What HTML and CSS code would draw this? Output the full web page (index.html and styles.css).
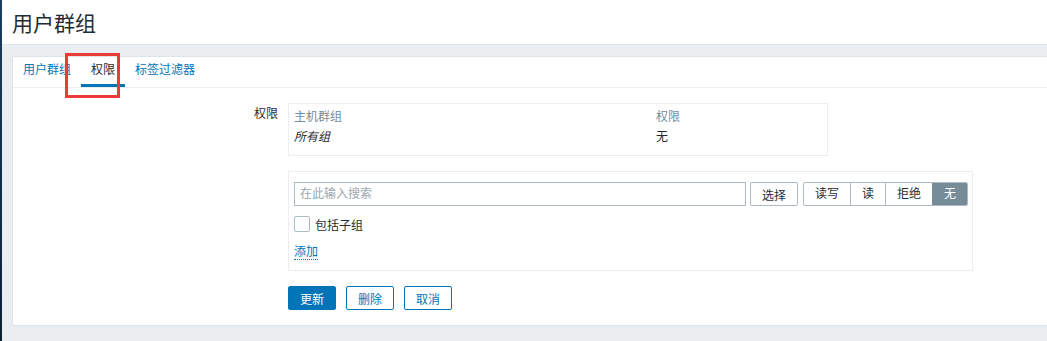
FILE: index.html
```html
<!DOCTYPE html>
<html lang="zh-CN">
<head>
    <meta charset="UTF-8">
    <meta name="viewport" content="width=device-width, initial-scale=1.0">
    <title>用户群组</title>
    <link rel="stylesheet" href="styles.css">
</head>
<body>
    <div class="edge"></div>
    <div class="main">
        <header class="page-header">
            <h1>用户群组</h1>
        </header>
        <div class="content">
            <div class="panel">
                <ul class="tabs">
                    <li class="tab">用户群组</li>
                    <li class="tab active">权限</li>
                    <li class="tab">标签过滤器</li>
                </ul>
                <div class="form">
                    <div class="form-row">
                        <label class="form-label">权限</label>
                        <div class="form-field">
                            <table class="perm-table">
                                <tr class="head">
                                    <td class="col-group">主机群组</td>
                                    <td>权限</td>
                                </tr>
                                <tr>
                                    <td class="col-group"><i>所有组</i></td>
                                    <td>无</td>
                                </tr>
                            </table>
                        </div>
                    </div>
                    <div class="form-row">
                        <div class="form-label"></div>
                        <div class="form-field">
                            <div class="add-box">
                                <div class="search-line">
                                    <input class="search" type="text" placeholder="在此输入搜索">
                                    <button class="btn-alt">选择</button>
                                    <div class="segments">
                                        <span class="seg">读写</span>
                                        <span class="seg">读</span>
                                        <span class="seg">拒绝</span>
                                        <span class="seg on">无</span>
                                    </div>
                                </div>
                                <label class="check-line"><span class="checkbox"></span>包括子组</label>
                                <a class="link-action">添加</a>
                            </div>
                        </div>
                    </div>
                    <div class="form-row">
                        <div class="form-label"></div>
                        <div class="form-field buttons">
                            <button class="btn primary">更新</button>
                            <button class="btn">删除</button>
                            <button class="btn">取消</button>
                        </div>
                    </div>
                </div>
            </div>
        </div>
    </div>
    <div class="highlight"></div>
</body>
</html>
```

FILE: styles.css
```css
body { margin: 0; display: flex; min-height: 100vh; background: #ebeef0; font-family: Arial, "Liberation Sans", "Noto Sans CJK SC", sans-serif; font-size: 12px; color: #1f2c33; overflow: hidden; }
.edge { width: 2px; background: linear-gradient(#1c3d5c, #0b2236); flex-shrink: 0; }
.main { flex: 1; }
.page-header { background: #fff; height: 45px; border-bottom: 1px solid #dfe4e7; box-sizing: border-box; padding-left: 10px; display: flex; align-items: center; }
h1 { margin: 0; font-size: 21px; font-weight: normal; color: #1f2c33; }
.content { padding: 11px 0 0 10px; }
.panel { background: #fff; border: 1px solid #dfe4e7; border-right: none; padding-bottom: 15px; }
.tabs { list-style: none; margin: 0; padding: 0; display: flex; border-bottom: 1px solid #ebeef0; height: 30px; }
.tab { padding: 0 10px; line-height: 27px; color: #0275b8; border-bottom: 3px solid transparent; }
.tab.active { color: #1f2c33; border-bottom-color: #0275b8; }
.form { padding-top: 15px; }
.form-row { display: flex; margin-bottom: 15px; }
.form-row:last-child { margin-bottom: 0; }
.form-label { width: 265px; flex-shrink: 0; text-align: right; padding-right: 10px; padding-top: 4px; line-height: 14px; }
.form-field { flex: 1; }
.perm-table { width: 540px; border: 1px solid #ebeef0; border-collapse: separate; border-spacing: 0; padding: 3px 5px 8px; }
.perm-table td { padding: 2px 0; line-height: 16px; }
.perm-table .head td { color: #768d99; }
.perm-table .col-group { width: 362px; }
.add-box { width: 673px; border: 1px solid #ebeef0; padding: 10px 5px 10px; }
.search-line { display: flex; align-items: center; white-space: nowrap; }
.search { width: 452px; flex-shrink: 0; height: 24px; box-sizing: border-box; border: 1px solid #acbbc2; padding: 0 5px; font: inherit; margin: 0; }
.search::placeholder { color: #9aa7ae; }
.btn-alt { flex-shrink: 0; height: 24px; margin-left: 4px; padding: 0 11px; background: #fff; border: 1px solid #acbbc2; border-radius: 2px; font: inherit; color: #1f2c33; white-space: nowrap; }
.segments { display: flex; flex-shrink: 0; margin-left: 5px; border: 1px solid #acbbc2; border-radius: 2px; height: 22px; overflow: hidden; }
.seg { padding: 0 11px; line-height: 22px; border-left: 1px solid #acbbc2; white-space: nowrap; }
.seg:first-child { border-left: none; }
.seg.on { background: #768d99; color: #fff; border-left-color: #768d99; }
.check-line { display: flex; align-items: center; margin-top: 10px; height: 16px; }
.checkbox { width: 14px; height: 14px; border: 1px solid #acbbc2; border-radius: 2px; margin-right: 5px; }
.link-action { display: inline-block; margin-top: 13px; color: #0275b8; border-bottom: 1px dotted #0275b8; line-height: 14px; }
.buttons { display: flex; gap: 10px; }
.btn { height: 24px; padding: 0 11px; background: #fff; border: 1px solid #0275b8; border-radius: 2px; color: #0275b8; font: inherit; white-space: nowrap; }
.btn.primary { background: #0275b8; color: #fff; }
.highlight { position: absolute; left: 65px; top: 53px; width: 49px; height: 39px; border: 3px solid #ec3a36; }
```
